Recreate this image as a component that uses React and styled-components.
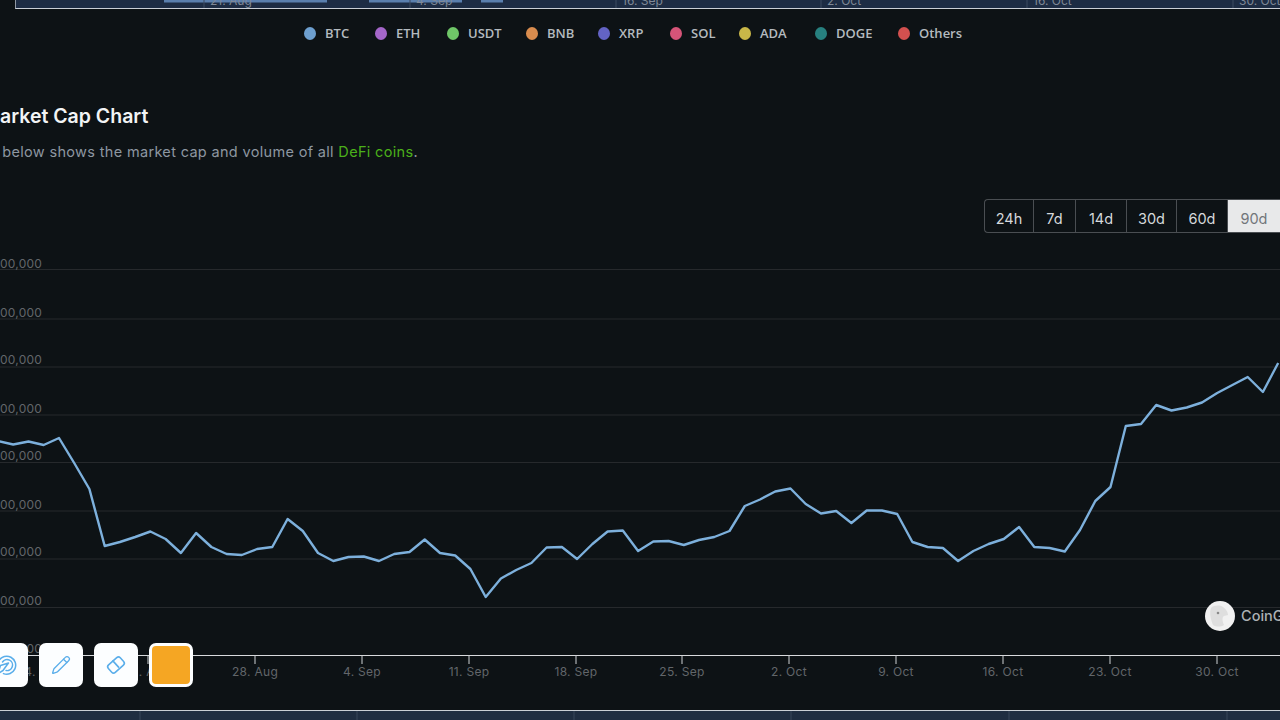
import React from 'react';
import styled, { createGlobalStyle } from 'styled-components';
import { Pencil } from 'lucide-react';

const GlobalStyle = createGlobalStyle`
  html, body {
    margin: 0;
    padding: 0;
    background: #0d1215;
    overflow: hidden;
  }
`;

const Page = styled.div`
  position: relative;
  width: 1280px;
  height: 720px;
  overflow: hidden;
  display: flex;
  flex-direction: column;
  background: #0d1215;
  font-family: Inter, 'Liberation Sans', sans-serif;
`;

const TopNavigator = styled.div`
  height: 8px;
  margin-left: 15px;
  background: #1d2c44;
  border-left: 1px solid #8f97a3;
  border-bottom: 1px solid #c9ced6;
  overflow: hidden;

  svg {
    display: block;
  }
`;

const Legend = styled.div`
  display: flex;
  align-items: center;
  height: 49px;
  padding-left: 304px;
  padding-bottom: 1px;
  box-sizing: border-box;
`;

const LegendItem = styled.div`
  display: flex;
  align-items: center;
  gap: 9px;
  width: ${props => props.$width}px;
  font-family: 'Open Sans', sans-serif;
  font-size: 13px;
  font-weight: 600;
  color: #b4babf;
`;

const Dot = styled.span`
  width: 12px;
  height: 13px;
  border-radius: 50%;
  background: ${props => props.$color};
  flex: none;
`;

const Header = styled.div`
  margin: 46px 0 0 -18px;
`;

const Title = styled.h2`
  margin: 0;
  font-size: 19.5px;
  line-height: 24px;
  font-weight: 600;
  color: #f2f4f5;
`;

const Description = styled.p`
  margin: 12px 0 0 -53px;
  font-size: 14.5px;
  line-height: 24px;
  letter-spacing: 0.33px;
  color: #8d97a1;
`;

const Accent = styled.span`
  color: #4bb01a;
`;

const RangeRow = styled.div`
  display: flex;
  justify-content: flex-end;
  margin-top: 35px;
`;

const RangeTabs = styled.div`
  display: flex;
  height: 34px;
  box-sizing: border-box;
  border: 1px solid #4a4e52;
  border-right: 0;
  border-radius: 4px 0 0 4px;
`;

const RangeTab = styled.div`
  width: ${props => props.$width}px;
  display: flex;
  align-items: center;
  justify-content: center;
  padding-top: 4px;
  box-sizing: border-box;
  font-size: 14.5px;
  color: ${props => (props.$active ? '#72767a' : '#d6d9dc')};
  background: ${props => (props.$active ? '#e8e9ea' : 'transparent')};
  border-right: ${props => (props.$active ? '0' : '1px solid #4a4e52')};
`;

const ChartArea = styled.div`
  margin-top: 12px;
  height: 465px;
  flex: none;

  svg {
    display: block;
  }
`;

const BottomNavigator = styled.div`
  flex: 1;
  background: #1f2d42;
  border-top: 1px solid #c9ced6;

  svg {
    display: block;
  }
`;

const Toolbar = styled.div`
  position: absolute;
  left: -16px;
  top: 643px;
  display: flex;
  gap: 11px;
`;

const ToolButton = styled.div`
  width: 44px;
  height: 44px;
  border-radius: 7px;
  background: #fcfeff;
  color: #5aaeea;
  display: flex;
  align-items: center;
  justify-content: center;
`;

const Swatch = styled.div`
  width: 44px;
  height: 44px;
  box-sizing: border-box;
  border-radius: 7px;
  border: 3px solid #fcfeff;
  background: #f5a623;
`;

const legendItems = [
  ['BTC', '#6d9fcf', 71],
  ['ETH', '#a466c9', 72],
  ['USDT', '#6fc768', 79],
  ['BNB', '#d98c4e', 72],
  ['XRP', '#6363c4', 72],
  ['SOL', '#d65478', 69],
  ['ADA', '#c9b748', 76],
  ['DOGE', '#27807f', 83],
  ['Others', '#d2504f', 70],
];

const ranges = [
  ['24h', 49],
  ['7d', 42],
  ['14d', 51],
  ['30d', 50],
  ['60d', 51],
  ['90d', 52, true],
];

const gridLines = [269.5, 319, 367, 415, 462.5, 511, 559, 607.5];

const yLabels = [
  ['$160,000,000,000', 268],
  ['$140,000,000,000', 317],
  ['$120,000,000,000', 364],
  ['$100,000,000,000', 413],
  ['$80,000,000,000', 460],
  ['$60,000,000,000', 509],
  ['$40,000,000,000', 556],
  ['$20,000,000,000', 605],
  ['$00,000', 653],
];

const xLabels = [
  ['14. Aug', 41],
  ['21. Aug', 148],
  ['28. Aug', 255],
  ['4. Sep', 362],
  ['11. Sep', 469],
  ['18. Sep', 576],
  ['25. Sep', 682],
  ['2. Oct', 789],
  ['9. Oct', 896],
  ['16. Oct', 1003],
  ['23. Oct', 1110],
  ['30. Oct', 1217],
];

const series = [
  441, 444.5, 441.5, 445, 438, 463, 489, 546, 542, 537, 531.5, 539, 553, 533, 547, 554, 555,
  549, 547, 519, 531, 553, 561, 557, 556.5, 561, 554, 552, 539.5, 553, 555.5, 569, 597, 578.5,
  570, 563, 547.5, 547, 559, 544, 531.5, 530.5, 551, 541.5, 541, 545, 540, 537, 531, 506, 499.5,
  491.5, 488.5, 504, 513.5, 511, 523, 510.5, 510.5, 514, 542, 547, 548, 561, 551, 544, 539, 527,
  547, 548, 551.5, 530, 501, 487, 426, 424, 405, 410.5, 407.5, 402.5, 393, 385, 377, 392, 363,
];

const linePoints = series.map((y, i) => `${(-2 + i * 15.24).toFixed(1)},${y}`).join(' ');

const topTicks = [
  ['21. Aug', 188],
  ['4. Sep', 394],
  ['16. Sep', 600],
  ['2. Oct', 805],
  ['16. Oct', 1011],
  ['30. Oct', 1217],
];

const TopStrip = () => (
  <svg width="1264" height="8" viewBox="0 0 1264 8">
    <rect x="148" y="0" width="163" height="2.5" fill="#5a7fae" />
    <rect x="353" y="0" width="93" height="2.5" fill="#5a7fae" />
    <rect x="465" y="0" width="22" height="2.5" fill="#5a7fae" />
    {topTicks.map(([label, x]) => (
      <g key={label}>
        <line x1={x} x2={x} y1="0" y2="8" stroke="#3c4a60" />
        <text x={x + 6} y="5" fontSize="12" fontFamily="Inter, sans-serif" fill="#7f8896">
          {label}
        </text>
      </g>
    ))}
  </svg>
);

const MainChart = () => (
  <svg width="1280" height="465" viewBox="0 245 1280 465">
    {gridLines.map(y => (
      <line key={y} x1="0" x2="1280" y1={y} y2={y} stroke="#26292c" />
    ))}
    <line x1="0" x2="1280" y1="655.5" y2="655.5" stroke="#d8dadd" />
    {yLabels.map(([label, y]) => (
      <text key={label} x="42" y={y} textAnchor="end" fontSize="12" letterSpacing="0.2" fill="#62666a">
        {label}
      </text>
    ))}
    {xLabels.map(([label, x]) => (
      <g key={label}>
        <line x1={x} x2={x} y1="655" y2="664" stroke="#cfd2d6" />
        <text x={x} y="676" textAnchor="middle" fontSize="12" letterSpacing="0.3" fill="#62666a">
          {label}
        </text>
      </g>
    ))}
    <polyline points={linePoints} fill="none" stroke="#7db0dc" strokeWidth="2.4" strokeLinejoin="round" />
    <circle cx="1220" cy="616" r="15" fill="#f1f1f1" />
    <path d="M1211 608c3-3 9-3 12-1 3 2 5 5 5 8l-4 1c-2 1-2 5 0 9-3 2-8 2-11 0-2-5-4-12-2-17z" fill="#dedede" />
    <circle cx="1218" cy="613" r="1.3" fill="#8a8a8a" />
    <text x="1241" y="621" fontSize="14.5" fontWeight="500" fill="#aeb1b4">
      CoinGecko
    </text>
  </svg>
);

const BottomStrip = () => (
  <svg width="1280" height="9" viewBox="0 0 1280 9">
    {[140, 357, 574, 791, 1009, 1227].map(x => (
      <line key={x} x1={x} x2={x} y1="0" y2="9" stroke="#39465a" />
    ))}
  </svg>
);

const LassoIcon = () => (
  <svg width="22" height="22" viewBox="0 0 22 22" fill="none" stroke="currentColor" strokeWidth="1.5" strokeLinecap="round" strokeLinejoin="round">
    <path d="M4 6.5A9 9 0 1 1 8.5 19.6" />
    <path d="M7.5 8a5.5 5.5 0 1 1 3.5 8.5" />
    <path d="M3 19.5 5.5 11.5 13.5 9 10.5 13 8 16.5z" />
  </svg>
);

const EraserIcon = () => (
  <svg width="22" height="22" viewBox="0 0 22 22" fill="none" stroke="currentColor" strokeWidth="1.6" strokeLinejoin="round">
    <rect x="3" y="6" width="16" height="10" rx="2.5" transform="rotate(-42 11 11)" />
    <path d="M7.4 6.4 14 13.6" />
  </svg>
);

const App = () => (
  <Page>
    <GlobalStyle />
    <TopNavigator>
      <TopStrip />
    </TopNavigator>
    <Legend>
      {legendItems.map(([label, color, width]) => (
        <LegendItem key={label} $width={width}>
          <Dot $color={color} />
          {label}
        </LegendItem>
      ))}
    </Legend>
    <Header>
      <Title>Market Cap Chart</Title>
      <Description>
        The chart below shows the market cap and volume of all <Accent>DeFi coins</Accent>.
      </Description>
    </Header>
    <RangeRow>
      <RangeTabs>
        {ranges.map(([label, width, active]) => (
          <RangeTab key={label} $width={width} $active={active}>
            {label}
          </RangeTab>
        ))}
      </RangeTabs>
    </RangeRow>
    <ChartArea>
      <MainChart />
    </ChartArea>
    <BottomNavigator>
      <BottomStrip />
    </BottomNavigator>
    <Toolbar>
      <ToolButton>
        <LassoIcon />
      </ToolButton>
      <ToolButton>
        <Pencil size={20} strokeWidth={1.6} />
      </ToolButton>
      <ToolButton>
        <EraserIcon />
      </ToolButton>
      <Swatch />
    </Toolbar>
  </Page>
);

export default App;
